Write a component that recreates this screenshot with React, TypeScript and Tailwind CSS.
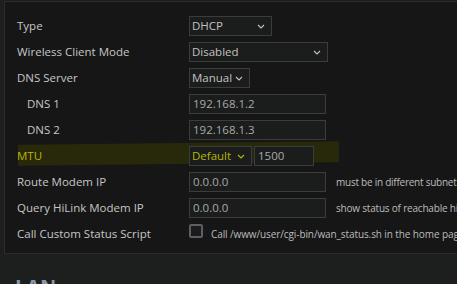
import { ReactNode } from "react";

function Chevron() {
  return (
    <svg width="8" height="5" viewBox="0 0 8 5" className="shrink-0">
      <path d="M1 1 L4 4 L7 1" fill="none" stroke="currentColor" strokeWidth="1.1" />
    </svg>
  );
}

function Select({ value, width, highlight }: { value: string; width: string; highlight?: boolean }) {
  return (
    <div
      className={`flex h-[20px] items-center justify-between border border-[#3b3d3d] bg-[#1b1c1c] pl-[2px] pr-[6px] ${width} ${
        highlight ? "text-[#b8b800]" : "text-[#c2c2c2]"
      }`}>
      <span>{value}</span>
      <Chevron />
    </div>
  );
}

function Input({ value, width }: { value: string; width: string }) {
  return (
    <div className={`flex h-[20px] items-center border border-[#3b3d3d] bg-[#1b1c1c] px-[3px] text-[#a9a9a9] ${width}`}>
      {value}
    </div>
  );
}

function Row({ label, indent, highlight, children }: { label: string; indent?: boolean; highlight?: boolean; children: ReactNode }) {
  return (
    <div className="flex h-[26px] items-center">
      <div
        className={`w-[172px] shrink-0 ${indent ? "pl-[10px]" : ""} ${
          highlight ? "text-[#b8b800]" : "text-[#c6c6c6]"
        }`}>
        {label}
      </div>
      <div className="flex items-center">{children}</div>
    </div>
  );
}

export default function App() {
  return (
    <div
      className="h-[284px] w-[457px] overflow-hidden bg-[#1d1e1e] pt-[1px] pl-[4px] text-[11.5px]"
      style={{ fontFamily: '"Open Sans", "Liberation Sans", sans-serif' }}>
      {/* WAN settings panel */}
      <div className="relative w-[500px] border border-[#2b2d2d] bg-[#161616] pt-[11px] pb-[6px] pl-[12px]">
        {/* marker highlight behind MTU row */}
        <div className="absolute top-[141px] left-[13px] h-[21px] w-[321px] -skew-y-[0.6deg] bg-[#28280a]" />
        <div className="relative">
          <Row label="Type">
            <Select value="DHCP" width="w-[83px]" />
          </Row>
          <Row label="Wireless Client Mode">
            <Select value="Disabled" width="w-[139px]" />
          </Row>
          <Row label="DNS Server">
            <Select value="Manual" width="w-[61px]" />
          </Row>
          <Row label="DNS 1" indent>
            <Input value="192.168.1.2" width="w-[137px]" />
          </Row>
          <Row label="DNS 2" indent>
            <Input value="192.168.1.3" width="w-[137px]" />
          </Row>
          <Row label="MTU" highlight>
            <Select value="Default" width="w-[63px]" highlight />
            <div className="ml-[2px]">
              <Input value="1500" width="w-[60px]" />
            </div>
          </Row>
          <Row label="Route Modem IP">
            <Input value="0.0.0.0" width="w-[137px]" />
            <span className="ml-[10px] whitespace-nowrap text-[10px] tracking-[-0.25px] text-[#bcbcbc]">must be in different subnet</span>
          </Row>
          <Row label="Query HiLink Modem IP">
            <Input value="0.0.0.0" width="w-[137px]" />
            <span className="ml-[10px] whitespace-nowrap text-[10px] tracking-[-0.2px] text-[#bcbcbc]">show status of reachable hilink modem</span>
          </Row>
          <Row label="Call Custom Status Script">
            <div className="-mt-[6px] h-[14px] w-[14px] rounded-[2px] border-2 border-[#5d5d63] bg-[#1b1b1b]" />
            <span className="ml-[8px] whitespace-nowrap text-[10px] tracking-[-0.1px] text-[#bcbcbc]">
              Call /www/user/cgi-bin/wan_status.sh in the home page
            </span>
          </Row>
        </div>
      </div>
      {/* next section heading */}
      <div className="mt-[23px] pl-[11px] text-[20px] font-bold leading-none text-[#8796a8]">LAN</div>
    </div>
  );
}
